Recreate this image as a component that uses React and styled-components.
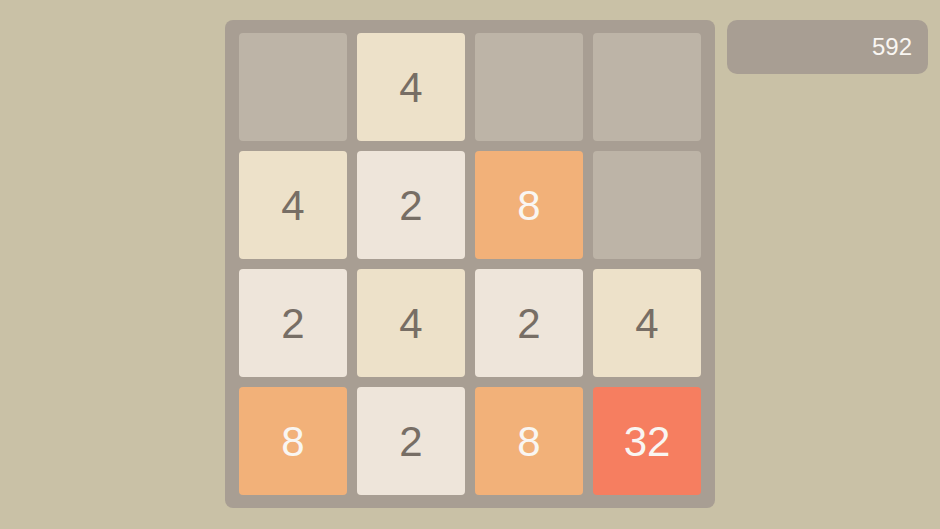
import styled, { createGlobalStyle } from 'styled-components';

const GlobalStyle = createGlobalStyle`
  html, body {
    margin: 0;
    padding: 0;
    background: #c9c1a6;
    font-family: "Liberation Sans", Arial, sans-serif;
  }
`;

const Page = styled.div`
  width: 940px;
  height: 529px;
  display: grid;
  grid-template-columns: 1fr 490px 1fr;
  column-gap: 12px;
  align-items: start;
  padding-top: 20px;
  box-sizing: border-box;
`;

const Board = styled.div`
  grid-column: 2;
  background: #a89e93;
  border-radius: 8px;
  padding: 13px 14px 13px;
  display: grid;
  grid-template-columns: repeat(4, 108px);
  grid-auto-rows: 108px;
  gap: 10px;
`;

const colors = {
  0: ['#bdb4a7', 'transparent'],
  2: ['#eee5da', '#776e65'],
  4: ['#ede1c9', '#776e65'],
  8: ['#f2b179', '#f9f6f2'],
  32: ['#f67e60', '#f9f6f2'],
};

const Tile = styled.div`
  border-radius: 4px;
  background: ${(p) => colors[p.$value][0]};
  color: ${(p) => colors[p.$value][1]};
  display: flex;
  align-items: center;
  justify-content: center;
  font-size: 42px;
  padding-top: 2px;
  box-sizing: border-box;
`;

const Side = styled.div`
  grid-column: 3;
  padding-right: 12px;
`;

const Score = styled.div`
  height: 54px;
  background: #a89e93;
  border-radius: 10px;
  color: #f9f6f2;
  font-size: 24px;
  display: flex;
  align-items: center;
  justify-content: flex-end;
  padding-right: 16px;
`;

const cells = [
  0, 4, 0, 0,
  4, 2, 8, 0,
  2, 4, 2, 4,
  8, 2, 8, 32,
];

export default function App() {
  return (
    <>
      <GlobalStyle />
      <Page>
        <Board>
          {cells.map((v, i) => (
            <Tile key={i} $value={v}>{v || ''}</Tile>
          ))}
        </Board>
        <Side>
          <Score>592</Score>
        </Side>
      </Page>
    </>
  );
}
